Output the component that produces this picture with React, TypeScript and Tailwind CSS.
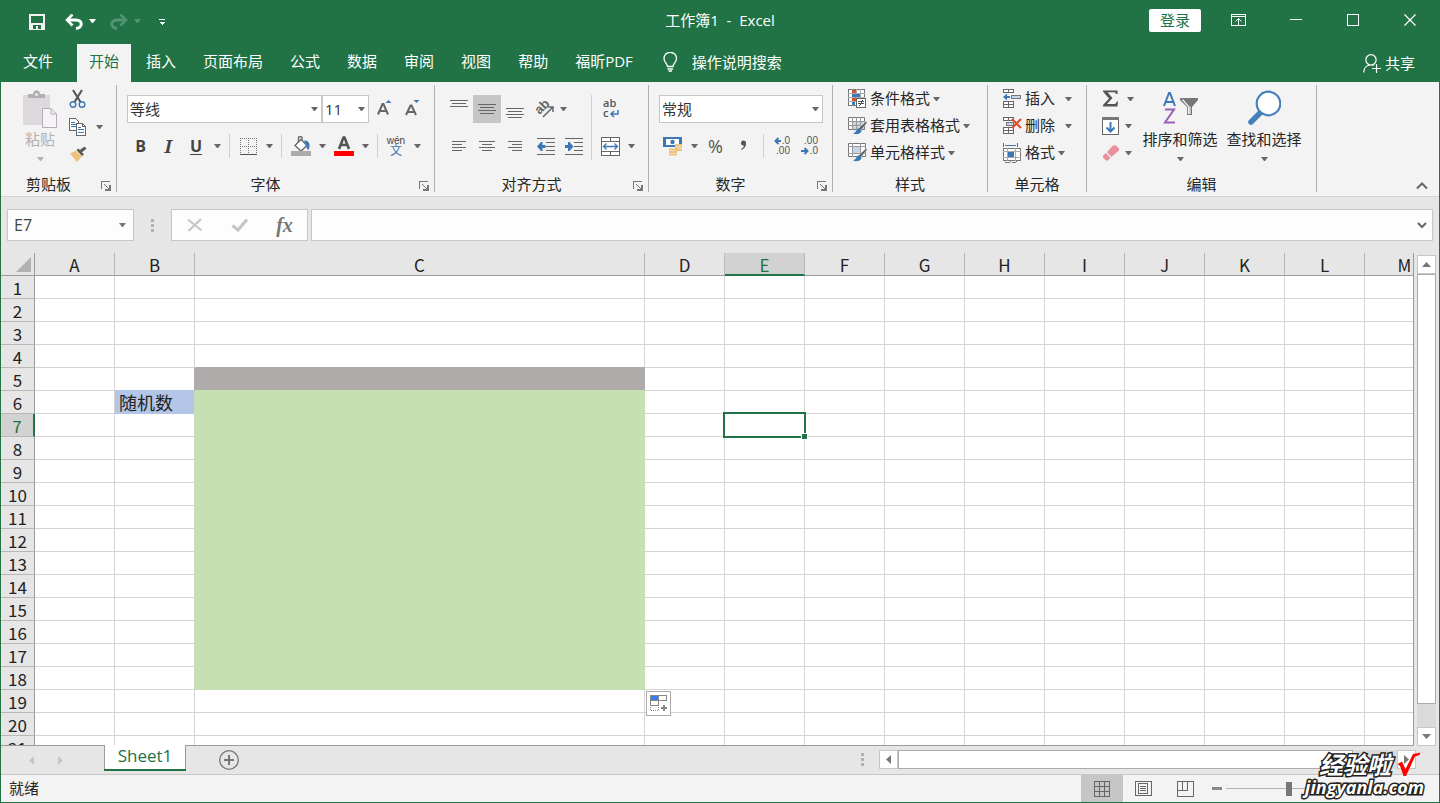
import React from 'react';

interface IconProps {
  children: React.ReactNode;
  w?: number;
  h?: number;
  crisp?: boolean;
}

const Icon = ({ children, w = 18, h = 18, crisp = false }: IconProps) => (
  <svg
    width={w}
    height={h}
    viewBox={`0 0 ${w} ${h}`}
    fill="none"
    aria-hidden="true"
    className="shrink-0"
    shapeRendering={crisp ? 'crispEdges' : 'auto'}
  >
    {children}
  </svg>
);

const Caret = () => (
  <svg width="7" height="4" viewBox="0 0 7 4" fill="currentColor" aria-hidden="true" className="shrink-0">
    <path d="M0 0H7L4 4H3Z" />
  </svg>
);

/* ---------- ribbon building blocks ---------- */

interface ToolProps {
  label: string;
  children: React.ReactNode;
  className?: string;
}

const Tool = ({ label, children, className = 'w-7' }: ToolProps) => (
  <button type="button" aria-label={label} className={`h-7 flex items-center justify-center shrink-0 ${className}`}>
    {children}
  </button>
);

const More = ({ label }: { label: string }) => (
  <button type="button" aria-label={label} className="w-3.5 h-7 flex items-center justify-center shrink-0 text-[#666]">
    <Caret />
  </button>
);

const Divider = () => (
  <div className="w-2.5 h-6 flex justify-center shrink-0">
    <div className="w-px h-full bg-[#d0d0d0]"></div>
  </div>
);

interface GroupProps {
  title: string;
  className: string;
  launcher?: boolean;
  children: React.ReactNode;
}

const Group = ({ title, className, launcher = false, children }: GroupProps) => (
  <section className={`h-full flex flex-col justify-between shrink-0 border-r border-[#b1b1b1] ${className}`}>
    {children}
    <div className="h-4 flex items-center">
      <h2 className="flex-1 text-center leading-4">{title}</h2>
      {launcher && (
        <button type="button" aria-label={`${title}设置`} className="w-5 flex justify-center pt-1">
          <Icon w={10} h={10} crisp>
            <path d="M0.5 8V0.5H9" stroke="#777" />
            <path d="M3 3L8 8M9 4V9H4" stroke="#777" strokeWidth="1.3" />
          </Icon>
        </button>
      )}
    </div>
  </section>
);

interface PickerProps {
  label: string;
  value: string;
  className: string;
}

const Picker = ({ label, value, className }: PickerProps) => (
  <div className={`relative h-7 shrink-0 ${className}`}>
    <select
      aria-label={label}
      defaultValue={value}
      className="w-full h-full appearance-none bg-white border border-[#c6c6c6] pl-0.5 text-[#333] outline-none"
    >
      <option>{value}</option>
    </select>
    <span className="absolute right-1 top-3 text-[#666] pointer-events-none">
      <Caret />
    </span>
  </div>
);

interface RowButtonProps {
  icon: React.ReactNode;
  label: string;
  spaced?: boolean;
}

const RowButton = ({ icon, label, spaced = false }: RowButtonProps) => (
  <button type="button" className="h-[27px] flex items-center gap-1">
    <span className="w-[18px] shrink-0">{icon}</span>
    <span className="flex items-center whitespace-nowrap">
      {label}
      <span className={`text-[#666] ${spaced ? 'pl-2.5' : 'pl-[3px]'}`}>
        <Caret />
      </span>
    </span>
  </button>
);

const Lines = ({ rows }: { rows: [number, number, number][] }) => (
  <Icon crisp>
    {rows.map(([x, y, len]) => (
      <path key={y} d={`M${x} ${y + 0.5}h${len}`} stroke="#666" />
    ))}
  </Icon>
);

/* ---------- title bar ---------- */

const TitleBar = () => (
  <header className="h-10 flex items-center shrink-0 text-white">
    <div className="flex-1 flex items-center">
      <button type="button" aria-label="保存" className="pl-7 pt-1">
        <Icon w={16} h={16} crisp>
          <path d="M0 0H16V16H0Z" fill="#f3f3f3" />
          <path d="M2 2H14V9H2ZM4 11H12V15H9V12H7V15H4Z" fill="#217346" />
        </Icon>
      </button>
      <button type="button" aria-label="撤消" className="ml-5 pt-1">
        <Icon w={18} h={16}>
          <path d="M2 6H11C18 6 18 14 11 14.500" stroke="#fff" strokeWidth="3" />
          <path d="M7.500 0.500L2 6L7.500 11.500" stroke="#fff" strokeWidth="2.600" />
        </Icon>
      </button>
      <button type="button" aria-label="撤消列表" className="ml-1.5 pt-0.5">
        <Caret />
      </button>
      <button type="button" aria-label="恢复" className="ml-3.5 pt-1 text-[#539572]">
        <Icon w={18} h={16}>
          <path d="M16 6H7C0 6 0 14 7 14.500" stroke="currentColor" strokeWidth="3" />
          <path d="M10.500 0.500L16 6L10.500 11.500" stroke="currentColor" strokeWidth="2.600" />
        </Icon>
      </button>
      <button type="button" aria-label="恢复列表" className="ml-1.5 pt-0.5 text-[#539572]">
        <Caret />
      </button>
      <button type="button" aria-label="自定义快速访问工具栏" className="ml-[18px] pt-1">
        <Icon w={6} h={6} crisp>
          <path d="M0 0H6V1H0ZM0 3H6L3 6Z" fill="#fff" />
        </Icon>
      </button>
    </div>
    <h1 className="whitespace-pre">工作簿1  -  Excel</h1>
    <div className="flex-1 flex items-center justify-end">
      <button type="button" className="w-[52px] h-[23px] bg-white text-[#217346] rounded-xs leading-5 mr-2">
        登录
      </button>
      <button type="button" aria-label="功能区显示选项" className="w-[58px] h-10 flex items-center justify-center">
        <Icon w={15} h={12} crisp>
          <path d="M0.500 0.500H14.500V11.500H0.500ZM0 2.500H15M7.500 4V11" stroke="#fff" />
          <path d="M4.500 7.500L7.500 4.500L10.500 7.500" stroke="#fff" shapeRendering="auto" />
        </Icon>
      </button>
      <button type="button" aria-label="最小化" className="w-[57px] h-10 flex items-center justify-center">
        <Icon w={12} h={12} crisp>
          <path d="M0 5.500H12" stroke="#fff" />
        </Icon>
      </button>
      <button type="button" aria-label="最大化" className="w-[57px] h-10 flex items-center justify-center">
        <Icon w={12} h={12} crisp>
          <path d="M0.500 0.500H11.500V11.500H0.500Z" stroke="#fff" />
        </Icon>
      </button>
      <button type="button" aria-label="关闭" className="w-[58px] pr-px h-10 flex items-center justify-center">
        <Icon w={12} h={12}>
          <path d="M0.500 0.500L11.500 11.500M11.500 0.500L0.500 11.500" stroke="#fff" strokeWidth="1.200" />
        </Icon>
      </button>
    </div>
  </header>
);

const TABS = ['插入', '页面布局', '公式', '数据', '审阅', '视图', '帮助', '福昕PDF'];

const TabBar = () => (
  <nav className="flex items-stretch shrink-0 pt-1 text-white">
    <div className="h-[38px] flex gap-[3px] whitespace-nowrap leading-5">
      <button type="button" className="pl-[22px] pr-[21px] pb-1">文件</button>
      <button type="button" className="px-3 pb-1 bg-[#f3f3f3] text-[#217346]">开始</button>
      {TABS.map(tab => (
        <button key={tab} type="button" className="px-3 pb-1">
          {tab}
        </button>
      ))}
    </div>
    <button type="button" className="flex items-center gap-3.5 pl-[18px] pb-0.5">
      <Icon w={15} h={20}>
        <path
          d="M4.500 14.500C4.500 11.500 1 10.500 1 6.500A6.200 6.200 0 0 1 13.500 6.500C13.500 10.500 10 11.500 10 14.500ZM4.500 17H10M5.500 19H9"
          stroke="#fff"
          strokeWidth="1.300"
        />
      </Icon>
      操作说明搜索
    </button>
    <button type="button" className="ml-auto mr-6 flex items-center gap-1">
      <Icon w={18} h={19}>
        <path
          d="M8 0.700A5 5 0 1 1 8 11A5 5 0 1 1 8 0.700ZM0.700 18.500C0.700 14 3.500 11 8 11C9 11 10 11.200 10.500 11.500M9 14.500H18M13.500 10V19"
          stroke="#fff"
          strokeWidth="1.200"
        />
      </Icon>
      共享
    </button>
  </nav>
);

/* ---------- ribbon ---------- */

const ClipboardGroup = () => (
  <Group title="剪贴板" launcher className="w-[116px]">
    <div className="flex pl-[18px]">
      <button type="button" className="w-[42px] pt-[5px] flex flex-col items-center text-[#b1b1b1]">
        <Icon w={34} h={38}>
          <path d="M0 5H27V35H0Z" fill="#dcd8dc" />
          <path d="M5 4H10C10 -1 17 -1 17 4H22V8H5Z" fill="#b1afb1" />
          <path d="M12 3.500h3v2h-3Z" fill="#f3f3f3" />
          <path d="M19.500 18.500H28L33.500 24V37.500H19.500Z" fill="#f6f2f8" stroke="#b1afb1" />
          <path d="M28 18.500V24H33.500" stroke="#b1afb1" />
        </Icon>
        <span className="mt-[3px] leading-4">粘贴</span>
        <span className="mt-2.5">
          <Caret />
        </span>
      </button>
      <div className="flex flex-col pl-[3px]">
        <Tool label="剪切">
          <Icon w={18} h={20}>
            <path d="M4 1L11.500 13M13 1L5.500 13" stroke="#595959" strokeWidth="2.200" />
            <circle cx="4" cy="15.500" r="2.800" stroke="#3b78b5" strokeWidth="1.400" />
            <circle cx="13" cy="15.500" r="2.800" stroke="#3b78b5" strokeWidth="1.400" />
          </Icon>
        </Tool>
        <div className="flex">
          <Tool label="复制">
            <Icon w={18} h={18} crisp>
              <path d="M0.500 0.500H6.500L9.500 3.500V12.500H0.500Z" fill="#fff" stroke="#666" />
              <path d="M2 4.500H6M2 6.500H7M2 8.500H7" stroke="#3b78b5" />
              <path d="M7.500 5.500H13.500L16.500 8.500V17.500H7.500Z" fill="#fff" stroke="#666" />
              <path d="M13.500 5.500V8.500H16.500" stroke="#666" />
              <path d="M9 9.500H12M9 11.500H15M9 14.500H15" stroke="#3b78b5" />
            </Icon>
          </Tool>
          <More label="复制选项" />
        </div>
        <Tool label="格式刷">
          <Icon w={18} h={16}>
            <path d="M1 6.500L7 3.500L13 9.500L8 15Z" fill="#ecc37d" />
            <path d="M7.500 3L9.500 1.500L15 7.500L13 9Z" fill="#595959" />
            <path d="M11.500 4.500L16.500 0.500" stroke="#595959" strokeWidth="3" />
          </Icon>
        </Tool>
      </div>
    </div>
  </Group>
);

const FontGroup = () => (
  <Group title="字体" launcher className="w-[318px]">
    <div className="flex flex-col gap-[9px] pl-2.5 pt-2.5">
      <div className="flex">
        <Picker label="字体名称" value="等线" className="w-[195px]" />
        <Picker label="字号" value="11" className="w-[47px]" />
        <Tool label="增大字号" className="w-7 ml-0.5">
          <Icon w={16} h={18}>
            <path d="M1 14.500L5.500 4H6.500L11 14.500M3 11H9" stroke="#666" strokeWidth="2" />
            <path d="M8.500 3H14.500L11.500 0Z" fill="#3b78b5" />
          </Icon>
        </Tool>
        <Tool label="减小字号">
          <Icon w={16} h={18}>
            <path d="M1 15L5.500 5.500H6.500L11 15M3 12H9" stroke="#666" strokeWidth="2" />
            <path d="M8.500 0H14.500L11.500 3Z" fill="#3b78b5" />
          </Icon>
        </Tool>
      </div>
      <div className="flex items-center text-[#444]">
        <Tool label="加粗" className="w-[27px]">
          <b className="text-base">B</b>
        </Tool>
        <Tool label="倾斜">
          <b className="font-['Noto_Serif','Liberation_Serif',serif] italic text-lg">I</b>
        </Tool>
        <Tool label="下划线">
          <b className="text-base underline underline-offset-2">U</b>
        </Tool>
        <More label="下划线选项" />
        <Divider />
        <Tool label="边框">
          <Icon w={17} h={17} crisp>
            <path d="M0.500 0V16M8.500 0V16M16.500 0V16M0 0.500H17M0 8.500H17" stroke="#777" strokeDasharray="1 1" />
            <path d="M0 16.500H17" stroke="#555" />
          </Icon>
        </Tool>
        <More label="边框选项" />
        <Divider />
        <Tool label="填充颜色" className="w-[29px]">
          <Icon w={20} h={20}>
            <path d="M7.500 8V1.500C7.500 0.500 11 0.500 11 1.500V5" stroke="#666" strokeWidth="1.400" />
            <path d="M4 9.500L10 3.500L16 9.500L10 15Z" fill="#fff" stroke="#666" strokeWidth="1.300" />
            <path d="M13 4.500C18 4 19.500 8 18 13C17.500 14 16 14 16 12.500Z" fill="#3b78b5" />
            <path d="M0 15H20V20H0Z" fill="#afabab" />
          </Icon>
        </Tool>
        <More label="填充颜色选项" />
        <Tool label="字体颜色" className="w-[29px]">
          <Icon w={20} h={20}>
            <path d="M5 13L9.500 1.500H10.500L15 13M7 9H13" stroke="#555" strokeWidth="2.600" />
            <path d="M0 15H20V20H0Z" fill="#f00" />
          </Icon>
        </Tool>
        <More label="字体颜色选项" />
        <Divider />
        <Tool label="拼音">
          <span className="flex flex-col items-center font-['Liberation_Sans','Noto_Sans_CJK_SC',sans-serif] text-[10px] leading-[10px]">
            wén
            <span className="text-[12px] leading-[11px] text-[#3b78b5]">文</span>
          </span>
        </Tool>
        <More label="拼音选项" />
      </div>
    </div>
  </Group>
);

const Indent = ({ right = false }: { right?: boolean }) => (
  <Icon w={18} h={17} crisp>
    <path d="M0 0.500H18M9 4.500H18M9 8.500H18M9 12.500H18M0 16.500H18" stroke="#666" />
    <path
      d={right ? 'M8.500 8.500L4.500 4H3V7H0V10H3V13H4.500Z' : 'M0 8.500L4 4H5.500V7H8.500V10H5.500V13H4Z'}
      fill="#3b78b5"
      shapeRendering="auto"
    />
  </Icon>
);

const AlignGroup = () => (
  <Group title="对齐方式" launcher className="w-[214px]">
    <div className="flex pl-2.5 pt-2.5">
      <div className="w-[142px] flex flex-col gap-[9px]">
        <div className="flex">
          <Tool label="顶端对齐">
            <Lines rows={[[0, 0, 18], [2, 3, 14], [0, 6, 18]]} />
          </Tool>
          <Tool label="垂直居中" className="w-7 bg-[#c6c6c6]">
            <Lines rows={[[0, 4, 18], [2, 7, 14], [0, 10, 18], [2, 13, 14]]} />
          </Tool>
          <Tool label="底端对齐">
            <Lines rows={[[0, 8, 18], [2, 11, 14], [0, 14, 18], [2, 17, 14]]} />
          </Tool>
          <Tool label="方向" className="w-6 ml-[3px]">
            <Icon w={24} h={24}>
              <text
                x="3"
                y="15"
                fontSize="13"
                fontWeight="700"
                fontFamily="Liberation Sans"
                fill="#666"
                transform="rotate(-45 9 11)"
              >
                ab
              </text>
              <path d="M11 20L21 10M21 15V10H16" stroke="#666" strokeWidth="1.500" />
            </Icon>
          </Tool>
          <More label="方向选项" />
        </div>
        <div className="flex">
          <Tool label="左对齐">
            <Lines rows={[[2, 4, 14], [2, 7, 10], [2, 10, 14], [2, 13, 10]]} />
          </Tool>
          <Tool label="居中">
            <Lines rows={[[1, 4, 16], [4, 7, 10], [1, 10, 16], [4, 13, 10]]} />
          </Tool>
          <Tool label="右对齐">
            <Lines rows={[[2, 4, 14], [6, 7, 10], [2, 10, 14], [6, 13, 10]]} />
          </Tool>
          <Tool label="减少缩进量" className="w-7 ml-[3px]">
            <Indent />
          </Tool>
          <Tool label="增加缩进量">
            <Indent right />
          </Tool>
        </div>
      </div>
      <div className="w-[9px] flex justify-center">
        <div className="w-px h-full bg-[#d0d0d0]"></div>
      </div>
      <div className="flex flex-col gap-[9px]">
        <Tool label="自动换行">
          <Icon w={20} h={28}>
            <text x="3" y="12" fontSize="11" fontWeight="600" fontFamily="Open Sans" fill="#555">
              ab
            </text>
            <text x="3" y="22" fontSize="11" fontWeight="600" fontFamily="Open Sans" fill="#555">
              c
            </text>
            <path d="M18 15V19H11M14 16L11 19L14 22" stroke="#3b78b5" strokeWidth="1.500" />
          </Icon>
        </Tool>
        <div className="flex">
          <Tool label="合并后居中">
            <Icon w={19} h={19} crisp>
              <path d="M0.500 0.500H18.500V18.500H0.500Z" fill="#fff" stroke="#666" />
              <path d="M0 4.500H19M0 14.500H19M9.500 0V4M9.500 15V19" stroke="#666" />
              <path
                d="M2.500 9.500H16.500M5.500 6.500L2.500 9.500L5.500 12.500M13.500 6.500L16.500 9.500L13.500 12.500"
                stroke="#3b78b5"
                strokeWidth="1.300"
                shapeRendering="auto"
              />
            </Icon>
          </Tool>
          <More label="合并选项" />
        </div>
      </div>
    </div>
  </Group>
);

const Decimal = ({ increase = false }: { increase?: boolean }) => (
  <Icon w={20} h={24}>
    <text x="18" y="10" textAnchor="end" fontSize="10" fontFamily="Liberation Sans" fill="#555">
      {increase ? '.0' : '.00'}
    </text>
    <text x="18" y="20" textAnchor="end" fontSize="10" fontFamily="Liberation Sans" fill="#555">
      {increase ? '.00' : '.0'}
    </text>
    <path
      d={increase ? 'M3 7H9M6.500 4L3.500 7L6.500 10' : 'M1 17H8M4.500 14L7.500 17L4.500 20'}
      stroke="#3b78b5"
      strokeWidth="2"
    />
  </Icon>
);

const NumberGroup = () => (
  <Group title="数字" launcher className="w-[184px]">
    <div className="flex flex-col gap-[9px] pl-2.5 pt-2.5">
      <Picker label="数字格式" value="常规" className="w-[164px]" />
      <div className="flex items-center text-[#555]">
        <Tool label="会计数字格式">
          <Icon w={20} h={20}>
            <path d="M0 1H19V11H0Z" fill="#3b78b5" />
            <path d="M3 3H16V9H3Z" fill="#fff" />
            <circle cx="9.500" cy="6" r="2.200" fill="#3b78b5" />
            <path d="M12 8H19V16H14V20H6V12H12Z" fill="#f3f3f3" />
            <path d="M12 9H19M12 11.500H19M12 14H19M6 13.500H14M6 16H14M6 18.500H14" stroke="#ecc37d" strokeWidth="1.800" />
          </Icon>
        </Tool>
        <More label="会计数字格式选项" />
        <Tool label="百分比样式" className="w-[29px]">
          <span className="text-lg">%</span>
        </Tool>
        <Tool label="千位分隔样式">
          <Icon w={8} h={12}>
            <path d="M1 3A2.500 2.500 0 0 1 6 3C6.300 6.500 4 9 1.200 10V8.800C3 8 3.800 7 3.800 5.500A2.500 2.500 0 0 1 1 3Z" fill="#555" />
          </Icon>
        </Tool>
        <Divider />
        <Tool label="增加小数位数">
          <Decimal increase />
        </Tool>
        <Tool label="减少小数位数" className="w-[27px]">
          <Decimal />
        </Tool>
      </div>
    </div>
  </Group>
);

const Brush = () => (
  <>
    <path d="M18.500 5L11 12L13 14L19 7Z" fill="#555" stroke="#f3f3f3" strokeWidth="0.600" />
    <path d="M11.500 12C8 12 9.500 16 5 17.500C9 19 13.500 18 13.500 14Z" fill="#3b78b5" />
  </>
);

const StylesGroup = () => (
  <Group title="样式" className="w-[155px]">
    <div className="flex flex-col items-start pl-[15px]">
      <RowButton
        label="条件格式"
        icon={
          <Icon w={18} h={19} crisp>
            <path d="M0.500 0.500H16.500V16.500H0.500Z" fill="#fff" stroke="#777" />
            <path d="M0 4.500H17M0 8.500H17M0 12.500H17M4.500 0V17M8.500 0V17M12.500 0V17" stroke="#aaa" />
            <path d="M4 1H8V4H4ZM4 9H10V12H4Z" fill="#dc4f2b" />
            <path d="M4 5H12V8H4ZM4 13H7V16H4Z" fill="#3b78b5" />
            <path d="M8.500 9.500H17.500V18.500H8.500Z" fill="#fff" stroke="#666" />
            <path d="M10 12.500H16M10 14.500H16M14.500 11L11.500 17" stroke="#555" />
          </Icon>
        }
      />
      <RowButton
        label="套用表格格式"
        icon={
          <Icon w={19} h={19}>
            <path d="M0.500 1.500H16.500V13.500H0.500Z" fill="#fff" stroke="#777" />
            <path d="M5 5H16V13H5Z" fill="#c5d5ea" />
            <path d="M0 5.500H17M0 9.500H17M4.500 1V14M8.500 1V14M12.500 1V14" stroke="#999" />
            <Brush />
          </Icon>
        }
      />
      <RowButton
        label="单元格样式"
        icon={
          <Icon w={19} h={19}>
            <path d="M0.500 0.500H17.500V13.500H0.500Z" fill="#fff" stroke="#777" />
            <path d="M4 4H13V11H4Z" fill="#c5d5ea" />
            <path d="M0 3.500H18M0 10.500H18M4.500 0V14M12.500 0V14" stroke="#999" />
            <Brush />
          </Icon>
        }
      />
    </div>
  </Group>
);

const CellsGroup = () => (
  <Group title="单元格" className="w-[99px]">
    <div className="flex flex-col items-start pl-[15px]">
      <RowButton
        label="插入"
        spaced
        icon={
          <Icon w={18} h={19} crisp>
            <path d="M0.500 0.500H10.500V3.500H0.500ZM5.500 0.500V3.500M0.500 12.500H10.500V18.500H0.500ZM5.500 12.500V18.500M0.500 15.500H10.500" fill="#fff" stroke="#666" />
            <path d="M8.500 6.500H17.500V9.500H8.500Z" fill="#c5d5ea" stroke="#777" />
            <path d="M0 8L4 4.500V7H7V9H4V11.500Z" fill="#3b78b5" shapeRendering="auto" />
          </Icon>
        }
      />
      <RowButton
        label="删除"
        spaced
        icon={
          <Icon w={19} h={19} crisp>
            <path d="M0.500 1.500H10.500V4.500H0.500ZM5.500 1.500V4.500M0.500 11.500H10.500V17.500H0.500ZM5.500 11.500V17.500M0.500 14.500H10.500" fill="#fff" stroke="#666" />
            <path d="M3.500 6.500H10.500V9.500H3.500Z" fill="#c5d5ea" stroke="#777" />
            <path d="M9 3L18 12M18 3L9 12" stroke="#dc4f2b" strokeWidth="2.200" shapeRendering="auto" />
          </Icon>
        }
      />
      <RowButton
        label="格式"
        icon={
          <Icon w={18} h={20} crisp>
            <path d="M0.500 0V4M14.500 0V4M2 2H13" stroke="#3b78b5" />
            <path d="M0.500 5.500H17.500V17.500H0.500Z" fill="#fff" stroke="#777" />
            <path d="M4.500 5V18M12.500 5V18M0 8.500H18M0 14.500H18" stroke="#aaa" />
            <path d="M5 9H11V14H5Z" fill="#3b78b5" />
            <path d="M2 19.500H6L9 17.500M9 19.500H12L15 17.500" stroke="#777" />
          </Icon>
        }
      />
    </div>
  </Group>
);

const EditGroup = () => (
  <Group title="编辑" className="w-[230px]">
    <div className="flex pl-3.5 text-[#262626]">
      <div className="w-[37px] flex flex-col shrink-0">
        <button type="button" aria-label="自动求和" className="h-[27px] flex items-center gap-2 pl-px text-[#666]">
          <Icon w={17} h={17}>
            <path d="M1 0.500H15.500V4H14C13.500 2.500 13 2.200 11.500 2.200H5.500L10.500 8L5 14H12C13.500 14 14 13.500 14.800 11.500H16L15.500 16.500H1V15L7 8.500L1 1.500Z" fill="#555" />
          </Icon>
          <Caret />
        </button>
        <button type="button" aria-label="填充" className="h-[27px] flex items-center gap-1.5 pl-px text-[#666]">
          <Icon w={17} h={18} crisp>
            <path d="M0.500 0.500H16.500V17.500H0.500Z" fill="#fff" stroke="#666" />
            <path d="M0 0H17V3H0Z" fill="#777" />
            <path d="M8.500 5V14M4.500 10.500L8.500 14.500L12.500 10.500" stroke="#3b78b5" strokeWidth="2" shapeRendering="auto" />
          </Icon>
          <Caret />
        </button>
        <button type="button" aria-label="清除" className="h-[27px] flex items-center gap-1.5 pl-px text-[#666]">
          <Icon w={17} h={16}>
            <path d="M11 0.500H14L17 3.500V5.500L9.500 12L5 7Z" fill="#e8909c" />
            <path d="M4 8L8.500 12.800L6 15.500H4L1 12.500V10.500Z" fill="#e8909c" />
          </Icon>
          <Caret />
        </button>
      </div>
      <button type="button" className="w-[84px] pt-[5px] flex flex-col items-center">
        <Icon w={36} h={38}>
          <path d="M2 16L7 3H8L13 16M4 12H11" stroke="#3b78b5" strokeWidth="2" />
          <path d="M3 19.500H12L3 32.500H13" stroke="#9b5fb5" strokeWidth="2" />
          <path d="M18 8H36V10L30 17V25H25V17L18 10Z" fill="#777" />
          <path d="M20.500 9.500L26.500 16.500V23.500H28V16.500" stroke="#f3f3f3" strokeWidth="1.200" />
        </Icon>
        <span className="mt-[3px] leading-4 whitespace-nowrap">排序和筛选</span>
        <span className="mt-2.5 text-[#666]">
          <Caret />
        </span>
      </button>
      <button type="button" className="w-[84px] pt-[5px] flex flex-col items-center">
        <Icon w={34} h={38}>
          <path d="M4 32L14 22" stroke="#4680bb" strokeWidth="5.500" strokeLinecap="round" />
          <circle cx="21.500" cy="13.500" r="11.800" fill="#fff" stroke="#4680bb" strokeWidth="2.200" />
        </Icon>
        <span className="mt-[3px] leading-4 whitespace-nowrap">查找和选择</span>
        <span className="mt-2.5 text-[#666]">
          <Caret />
        </span>
      </button>
    </div>
  </Group>
);

const Ribbon = () => (
  <div className="flex shrink-0 h-[115px] bg-[#f3f3f3] border-b border-[#d2d2d2] pt-[3px] pb-1 text-[#262626]">
    <ClipboardGroup />
    <FontGroup />
    <AlignGroup />
    <NumberGroup />
    <StylesGroup />
    <CellsGroup />
    <EditGroup />
    <button type="button" aria-label="折叠功能区" className="ml-auto mr-[11px] self-end pb-0.5">
      <Icon w={12} h={8}>
        <path d="M1 6.500L6 1.500L11 6.500" stroke="#666" strokeWidth="2" />
      </Icon>
    </button>
  </div>
);

/* ---------- formula bar ---------- */

const Dots = () => (
  <div className="flex flex-col gap-0.5 shrink-0">
    <div className="size-[3px] bg-[#b1b1b1]"></div>
    <div className="size-[3px] bg-[#b1b1b1]"></div>
    <div className="size-[3px] bg-[#b1b1b1]"></div>
  </div>
);

const FormulaBar = () => (
  <div className="flex items-center shrink-0 h-14 px-1.5">
    <div className="w-[127px] h-8 flex items-center bg-[#fdfdfd] border border-[#c6c6c6] pr-[7px]">
      <input aria-label="名称框" defaultValue="E7" className="min-w-0 flex-1 pl-1.5 text-base text-[#444] outline-none" />
      <span className="text-[#777]">
        <Caret />
      </span>
    </div>
    <div className="w-[37px] flex justify-center">
      <Dots />
    </div>
    <div className="w-[137px] h-8 flex items-center bg-[#fdfdfd] border border-[#c6c6c6]">
      <button type="button" aria-label="取消" className="flex-1 flex justify-center">
        <Icon w={16} h={14}>
          <path d="M1 1.500L14.500 12.500M14 1L1.500 13" stroke="#c6c6c6" strokeWidth="2.200" />
        </Icon>
      </button>
      <button type="button" aria-label="输入" className="flex-1 flex justify-center">
        <Icon w={18} h={14}>
          <path d="M1.500 7.500L7 12L16 1.500" stroke="#c6c6c6" strokeWidth="3.200" />
        </Icon>
      </button>
      <button
        type="button"
        aria-label="插入函数"
        className="flex-1 text-center font-['Liberation_Serif',serif] italic font-bold text-xl leading-6 text-[#777]"
      >
        fx
      </button>
    </div>
    <div className="flex-1 ml-[3px] h-8 flex items-center bg-[#fdfdfd] border border-[#c6c6c6] pr-[5px]">
      <input aria-label="编辑栏" className="min-w-0 flex-1 px-2 outline-none" />
      <button type="button" aria-label="展开编辑栏">
        <Icon w={10} h={7}>
          <path d="M1 1L5 5L9 1" stroke="#666" strokeWidth="2" />
        </Icon>
      </button>
    </div>
  </div>
);

/* ---------- sheet ---------- */

const COLUMNS = ['A', 'B', 'C', 'D', 'E', 'F', 'G', 'H', 'I', 'J', 'K', 'L', 'M'];
const ROWS = Array.from({ length: 21 }, (_, i) => i + 1);

const cellStyle = (col: string, row: number) => {
  if (col === 'C' && row === 4) return 'bg-white border-r-[#d4d4d4] border-b-[#afabab]';
  if (col === 'C' && row === 5) return 'bg-[#afabab] border-r-[#afabab] border-b-[#c6e0b4]';
  if (col === 'C' && row > 5 && row < 19) return 'bg-[#c6e0b4] border-[#c6e0b4]';
  if (col === 'B' && row === 5) return 'bg-white border-r-[#afabab] border-b-[#b4c6e7]';
  if (col === 'B' && row === 6) return 'bg-[#b4c6e7] border-r-[#c6e0b4] border-b-[#b4c6e7]';
  if (col === 'B' && row > 6 && row < 19) return 'bg-white border-r-[#c6e0b4] border-b-[#d4d4d4]';
  return 'bg-white border-[#d4d4d4]';
};

const Sheet = () => (
  <table className="table-fixed border-separate border-spacing-0 w-0 font-['Noto_Sans_CJK_SC',sans-serif]">
    <colgroup>
      <col className="w-[34px]" />
      {COLUMNS.map(col => (
        <col key={col} className={col === 'C' ? 'w-[450px]' : 'w-20'} />
      ))}
    </colgroup>
    <thead>
      <tr>
        <th aria-label="全选" className="h-[23px] p-0 border-r border-b border-[#9b9b9b]">
          <div className="flex justify-end pr-[3px]">
            <Icon w={15} h={15}>
              <path d="M15 0V15H0Z" fill="#b1b1b1" />
            </Icon>
          </div>
        </th>
        {COLUMNS.map(col => (
          <th
            key={col}
            scope="col"
            className={`h-[23px] p-0 font-normal text-[17px] border-r border-r-[#b8b8b8] ${
              col === 'E'
                ? 'bg-[#d2d2d2] text-[#217346] border-b-2 border-b-[#217346]'
                : 'text-[#222] border-b border-b-[#9b9b9b]'
            }`}
          >
            <span className={`block leading-6 ${col === 'E' ? 'h-[21px]' : 'h-[22px]'}`}>{col}</span>
          </th>
        ))}
      </tr>
    </thead>
    <tbody>
      {ROWS.map(row => (
        <tr key={row}>
          <th
            scope="row"
            className={`h-[23px] p-0 font-normal text-[17px] border-b border-b-[#b8b8b8] ${
              row === 7
                ? 'bg-[#d2d2d2] text-[#217346] border-r-2 border-r-[#217346]'
                : 'text-[#222] border-r border-r-[#9b9b9b]'
            }`}
          >
            <span className="block h-[22px] leading-6">{row}</span>
          </th>
          {COLUMNS.map(col => (
            <td
              key={col}
              className={`h-[23px] p-0 border-r border-b text-lg ${cellStyle(col, row)} ${
                (col === 'E' && row === 7) || (col === 'D' && row === 19) ? 'relative' : ''
              }`}
            >
              {col === 'B' && row === 6 && <span className="block h-[22px] pl-1 leading-[22px] text-[#222]">随机数</span>}
              {col === 'E' && row === 7 && (
                <div className="absolute -inset-0.5 border-2 border-[#217346] z-10">
                  <div className="absolute -right-1 -bottom-1 size-[7px] bg-[#217346] border border-white"></div>
                </div>
              )}
              {col === 'D' && row === 19 && (
                <button
                  type="button"
                  aria-label="自动填充选项"
                  className="absolute left-px top-px size-[25px] flex items-center justify-center bg-white border border-[#ababab] z-10"
                >
                  <Icon w={18} h={17} crisp>
                    <path d="M0.500 0.500H8.500V5.500H0.500ZM8.500 0.500H16.500V5.500H8.500ZM0.500 5.500H8.500V10.500H0.500Z" fill="#fff" stroke="#888" />
                    <path d="M1 1H8V5H1Z" fill="#3a7bf7" />
                    <path d="M0.500 12V15.500H8.500V12" stroke="#888" strokeDasharray="1 1" />
                    <path d="M11 13H17M14 10V16" stroke="#888" strokeWidth="2" />
                  </Icon>
                </button>
              )}
            </td>
          ))}
        </tr>
      ))}
    </tbody>
  </table>
);

const Arrow = ({ dir }: { dir: 'up' | 'down' | 'left' | 'right' }) => {
  const paths = {
    up: 'M0 7L4.500 2L9 7Z',
    down: 'M0 2L4.500 7L9 2Z',
    left: 'M7 0L2 4.500L7 9Z',
    right: 'M2 0L7 4.500L2 9Z',
  };
  return (
    <Icon w={9} h={9}>
      <path d={paths[dir]} fill="currentColor" />
    </Icon>
  );
};

const scrollButton = 'size-[19px] shrink-0 flex items-center justify-center bg-white border border-[#c6c6c6] text-[#777]';

const Workspace = () => (
  <div className="flex flex-1 min-h-0">
    <div className="flex-1 min-w-0 overflow-hidden border-r border-b border-[#9b9b9b]">
      <Sheet />
    </div>
    <div className="w-[25px] shrink-0 flex flex-col items-center pt-0.5">
      <button type="button" aria-label="向上滚动" className={scrollButton}>
        <Arrow dir="up" />
      </button>
      <div className="w-[19px] flex-1 flex flex-col bg-[#dadada] pb-[23px]">
        <div className="flex-1 bg-white border border-[#ababab]"></div>
      </div>
      <button type="button" aria-label="向下滚动" className={scrollButton}>
        <Arrow dir="down" />
      </button>
    </div>
  </div>
);

const SheetTabs = () => (
  <div className="h-7 shrink-0 flex">
    <div className="w-[103px] flex items-center pl-[26px] gap-5 text-[#c6c6c6]">
      <button type="button" aria-label="上一个工作表">
        <Arrow dir="left" />
      </button>
      <button type="button" aria-label="下一个工作表">
        <Arrow dir="right" />
      </button>
    </div>
    <button
      type="button"
      className="relative -mt-px mb-[3px] w-[82px] pb-1 bg-white border-x border-[#9b9b9b] text-[#217346] text-[17px] leading-5"
    >
      Sheet1
      <span className="absolute -inset-x-px bottom-0 h-0.5 bg-[#217346]"></span>
    </button>
    <button type="button" aria-label="新工作表" className="ml-[33px]">
      <Icon w={20} h={20}>
        <circle cx="10" cy="10" r="9.300" stroke="#777" strokeWidth="1.300" />
        <path d="M5 10H15M10 5V15" stroke="#777" strokeWidth="2" />
      </Icon>
    </button>
    <div className="ml-auto w-[578px] flex items-center pb-px">
      <Dots />
      <div className="ml-[15px] w-[537px] flex">
        <button type="button" aria-label="向左滚动" className={scrollButton}>
          <Arrow dir="left" />
        </button>
        <div className="flex-1 flex bg-[#dadada] pr-11">
          <div className="flex-1 bg-white border border-[#ababab]"></div>
        </div>
        <button type="button" aria-label="向右滚动" className={scrollButton}>
          <Arrow dir="right" />
        </button>
      </div>
    </div>
  </div>
);

const StatusBar = () => (
  <footer className="h-7 shrink-0 flex items-center bg-[#f3f3f3] border-t border-[#c6c6c6] pl-2 text-[#262626]">
    就绪
    <div className="ml-auto w-[358px] h-full flex items-center">
      <button type="button" aria-label="普通" className="w-[42px] h-full flex items-center justify-center bg-[#c6c6c6]">
        <Icon w={16} h={16} crisp>
          <path d="M0.500 0.500H15.500V15.500H0.500ZM0 5.500H16M0 10.500H16M5.500 0V16M10.500 0V16" stroke="#666" />
        </Icon>
      </button>
      <button type="button" aria-label="页面布局" className="w-[41px] h-full flex items-center justify-center">
        <Icon w={17} h={15} crisp>
          <path d="M0.500 0.500H16.500V14.500H0.500ZM3.500 2.500H12.500V12.500H3.500ZM5 5.500H11M5 7.500H11M5 9.500H11" stroke="#666" />
        </Icon>
      </button>
      <button type="button" aria-label="分页预览" className="w-[42px] h-full flex items-center justify-center">
        <Icon w={17} h={16} crisp>
          <path d="M0.500 0.500H16.500V15.500H0.500ZM0 9.500H11M5.500 0V9M10.500 0V10" stroke="#666" />
        </Icon>
      </button>
      <button type="button" aria-label="缩小" className="ml-1.5">
        <Icon w={10} h={3} crisp>
          <path d="M0 0H10V3H0Z" fill="#888" />
        </Icon>
      </button>
      <input
        type="range"
        aria-label="缩放"
        defaultValue={50}
        className="ml-1 w-[126px] h-4 appearance-none bg-[linear-gradient(#b1b1b1,#b1b1b1)] bg-[length:100%_1px] bg-center bg-no-repeat [&::-webkit-slider-thumb]:appearance-none [&::-webkit-slider-thumb]:w-1.5 [&::-webkit-slider-thumb]:h-3.5 [&::-webkit-slider-thumb]:bg-[#777]"
      />
    </div>
  </footer>
);

const Watermark = () => (
  <div className="absolute right-4 bottom-1.5 flex flex-col items-start font-bold italic text-white [-webkit-text-stroke:3px_#222] [paint-order:stroke_fill] pointer-events-none">
    <div className="flex items-center pl-3.5 text-2xl leading-6">
      经验啦
      <svg width="24" height="25" viewBox="0 0 24 25" fill="none" aria-hidden="true" className="ml-1.5">
        <path d="M0.500 12L5 9.500L8.500 17L16 2L23.500 0.500L22.500 3L18 4.500L9 24H6.500L3 14Z" fill="#f00" stroke="#fff" strokeWidth="0.500" />
      </svg>
    </div>
    <div className="font-['Open_Sans',sans-serif] text-[18px] leading-5">jingyanla.com</div>
  </div>
);

const App = () => (
  <div className="relative h-screen overflow-hidden flex flex-col bg-[#217346] px-px pb-px font-['Open_Sans','Noto_Sans_CJK_SC',sans-serif] text-[15px]">
    <TitleBar />
    <TabBar />
    <main className="flex-1 min-h-0 flex flex-col bg-[#e6e6e6]">
      <Ribbon />
      <FormulaBar />
      <Workspace />
      <SheetTabs />
      <StatusBar />
    </main>
    <Watermark />
  </div>
);

export default App;
